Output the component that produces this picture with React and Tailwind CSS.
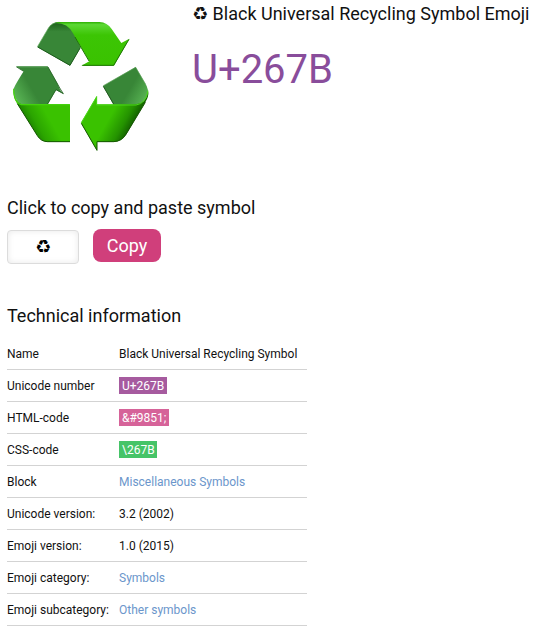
import React from "react";

const linkClass = "text-[#6b96cb]";

const rows = [
  { label: "Name", value: "Black Universal Recycling Symbol" },
  { label: "Unicode number", value: "U+267B", tag: "w-12 bg-[#a65b9f]" },
  { label: "HTML-code", value: "&#9851;", tag: "w-[50px] bg-[#d66399]" },
  { label: "CSS-code", value: "\\267B", tag: "w-[38px] bg-[#46c468]" },
  { label: "Block", value: "Miscellaneous Symbols", link: true },
  { label: "Unicode version:", value: "3.2 (2002)" },
  { label: "Emoji version:", value: "1.0 (2015)" },
  { label: "Emoji category:", value: "Symbols", link: true },
  { label: "Emoji subcategory:", value: "Other symbols", link: true },
];

function RecyclingEmoji() {
  return (
    <svg width="160" height="150" viewBox="0 0 480 450" className="mt-2.5 block shrink-0">
      <defs>
        <linearGradient id="top" x1="0" y1="0" x2="0" y2="1">
          <stop offset="0" stopColor="#2bb000" />
          <stop offset="0.06" stopColor="#5cd834" />
          <stop offset="0.3" stopColor="#3cc504" />
          <stop offset="1" stopColor="#3ac200" />
        </linearGradient>
        <linearGradient id="left" gradientUnits="userSpaceOnUse" x1="72" y1="355" x2="142" y2="315">
          <stop offset="0.2" stopColor="#1c8200" />
          <stop offset="0.5" stopColor="#2ba500" />
          <stop offset="1" stopColor="#3ac200" />
        </linearGradient>
        <linearGradient id="right" gradientUnits="userSpaceOnUse" x1="413" y1="343" x2="340" y2="302">
          <stop offset="0.1" stopColor="#105900" />
          <stop offset="0.45" stopColor="#249200" />
          <stop offset="1" stopColor="#3ac200" />
        </linearGradient>
        <linearGradient id="foldLeft" gradientUnits="userSpaceOnUse" x1="38" y1="262" x2="92" y2="230">
          <stop offset="0" stopColor="#5dba58" />
          <stop offset="1" stopColor="#388637" />
        </linearGradient>
        <linearGradient id="foldRight" gradientUnits="userSpaceOnUse" x1="448" y1="266" x2="392" y2="233">
          <stop offset="0" stopColor="#5dba58" />
          <stop offset="1" stopColor="#388637" />
        </linearGradient>
        <linearGradient id="foldTop" x1="0" y1="0" x2="0" y2="1">
          <stop offset="0" stopColor="#1b5f19" />
          <stop offset="0.22" stopColor="#388637" />
        </linearGradient>
      </defs>
      <path d="M112 111 L146 53 Q157 36 178 36 L207 37 L242 112 L210 167 Z" fill="url(#foldTop)" />
      <path d="M113 111 L210 166 L241 113" fill="none" stroke="#1c5b1b" strokeWidth="3" />
      <path d="M113 109 L146 53 Q157 37 178 37" fill="none" stroke="#5aa655" strokeWidth="2" />
      <path d="M165 39 Q172 36 184 36 L298 36 Q322 37 335 57 L364 99 L388 86 L342 167 L244 167 L268 154 L219 70 Q203 38 165 39 Z" fill="url(#top)" />
      <path d="M387 88 L341 166 L247 166 M267 153 L225 81" fill="none" stroke="#1d7504" strokeWidth="3" />
      <path d="M48 169 L143 169 L172 220 L181 241 L191 252 L168 240 L142 285 L62 285 Q38 263 41 237 Q42 230 71 184 Z" fill="url(#foldLeft)" />
      <path d="M49 171 L143 171" stroke="#62a35d" strokeWidth="2" />
      <path d="M50 171 L71 184 M144 171 L181 237 L190 251 L168 239 L142 283" fill="none" stroke="#225f20" strokeWidth="2.5" />
      <path d="M40 240 Q42 273 64 283 L210 283 L210 396 L143 396 Q123 394 112 377 L52 281 Q39 260 40 240 Z" fill="url(#left)" />
      <path d="M52 281 L112 377 Q123 395 143 395 L210 395" fill="none" stroke="#165603" strokeWidth="3" />
      <path d="M41 236 Q41 278 64 284 L209 284" fill="none" stroke="#43d20c" strokeWidth="3.5" />
      <path d="M309 228 L407 171 L440 228 Q451 253 434 269 Q425 284 407 285 L341 285 Z" fill="url(#foldRight)" />
      <path d="M310 229 L342 284" stroke="#245922" strokeWidth="3" />
      <path d="M310 227 L407 172 L437 223" fill="none" stroke="#5a9e56" strokeWidth="2" />
      <path d="M243 339 L291 257 L291 283 L408 283 Q438 281 445 244 Q447 259 436 277 L378 374 Q365 395 341 396 L291 396 L291 422 Z" fill="url(#right)" />
      <path d="M244 340 L291 421 L291 395 L341 395 Q365 394 378 373 L436 277" fill="none" stroke="#165603" strokeWidth="3" />
      <path d="M244 338 L290 260 L290 285 L408 285 Q438 281 444 242" fill="none" stroke="#4bd719" strokeWidth="3" />
    </svg>
  );
}

export default function App() {
  return (
    <main className="h-[633px] w-[539px] overflow-hidden bg-white font-['Roboto','DejaVu_Sans',sans-serif] text-[#111]">
      <header className="flex h-[190px] items-start">
        <RecyclingEmoji />
        <div className="ml-8">
          <h1 className="mt-[3px] text-lg leading-[22px] whitespace-nowrap">♻ Black Universal Recycling Symbol Emoji</h1>
          <div className="mt-[21px] text-[40px] leading-[48px] text-[#894d9b]">U+267B</div>
        </div>
      </header>

      <section className="h-[108px] px-[7px] pt-[7px]">
        <h2 className="text-lg leading-[22px]">Click to copy and paste symbol</h2>
        <div className="mt-[10px] flex gap-[14px]">
          <div className="mt-px flex h-[34px] w-[72px] items-center justify-center rounded border border-[#dcdcdc] text-lg text-black shadow-[inset_0_0_6px_#e8e8e8]">
            ♻
          </div>
          <button className="flex h-[33px] w-[68px] items-center justify-center rounded-lg bg-[#d03f7b] text-lg text-white">
            Copy
          </button>
        </div>
      </section>

      <section className="px-[7px] pt-[7px]">
        <h2 className="text-lg leading-[22px]">Technical information</h2>
        <dl className="mt-[11px] w-[300px] text-xs">
          {rows.map((row) => (
            <div key={row.label} className="flex h-8 items-center border-b border-[#d3d3d3]">
              <dt className="w-28 shrink-0 whitespace-nowrap">{row.label}</dt>
              <dd className="whitespace-nowrap">
                {row.tag ? (
                  <span className={"block h-[17px] px-[3px] leading-[18px] text-white " + row.tag}>{row.value}</span>
                ) : (
                  <span className={row.link ? linkClass : ""}>{row.value}</span>
                )}
              </dd>
            </div>
          ))}
        </dl>
      </section>
    </main>
  );
}
